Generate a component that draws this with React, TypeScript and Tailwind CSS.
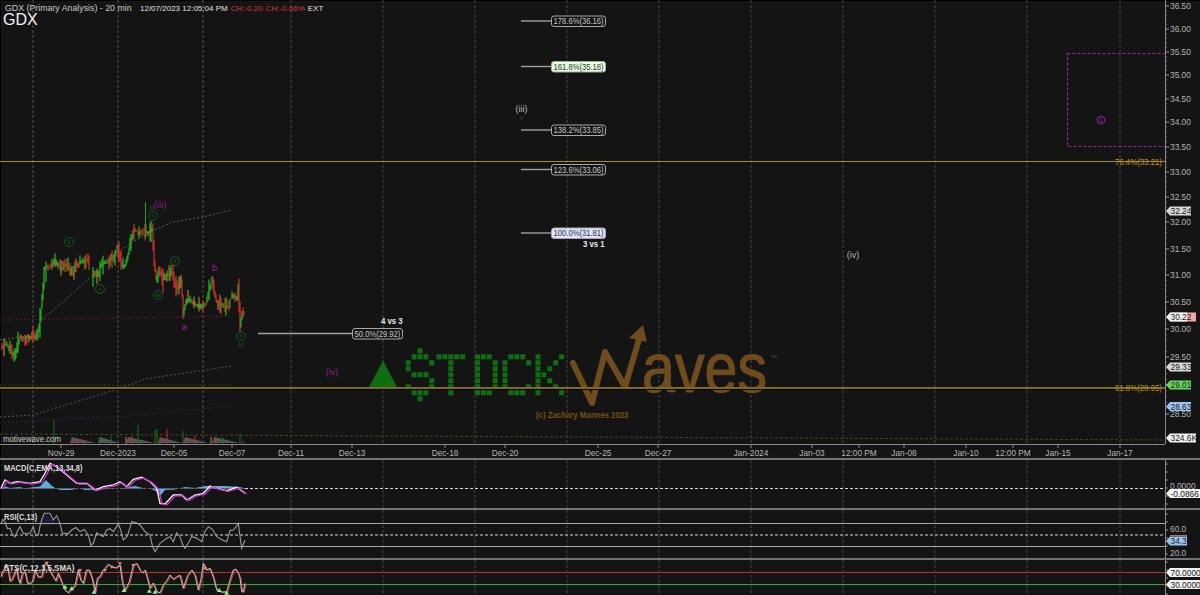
const GRID = [33, 118, 203, 291, 383, 475, 567, 659, 751, 843, 935, 1027, 1120];

const PRICE_AXIS: [string, number][] = [
  ['36.50', 6], ['36.00', 29], ['35.50', 52], ['35.00', 75], ['34.50', 99], ['34.00', 122], ['33.50', 147], ['33.00', 172],
  ['32.50', 197], ['32.00', 222], ['31.50', 249], ['31.00', 275], ['30.50', 302], ['30.00', 329], ['29.50', 357], ['', 385], ['28.50', 414],
];

const TIME_AXIS: [string, number][] = [
  ['Nov-29', 61], ['Dec-2023', 118], ['Dec-05', 174], ['Dec-07', 232], ['Dec-11', 291], ['Dec-13', 352], ['Dec-18', 445], ['Dec-20', 505],
  ['Dec-25', 598], ['Dec-27', 658], ['Jan-2024', 751], ['Jan-03', 812], ['12:00 PM', 859], ['Jan-08', 904], ['Jan-10', 966],
  ['12:00 PM', 1013], ['Jan-15', 1058], ['Jan-17', 1120],
];

const FIBS = [
  { label: '178.6%(36.16)', y: 21, x1: 521, x: 551, w: 54 },
  { label: '161.8%(35.18)', y: 66.5, x1: 521, x: 551, w: 54, bg: 'fill-[#e4ffdc]', dark: true },
  { label: '138.2%(33.85)', y: 130, x1: 521, x: 551, w: 54 },
  { label: '123.6%(33.06)', y: 169.5, x1: 521, x: 551, w: 54 },
  { label: '100.0%(31.81)', y: 233, x1: 521, x: 551, w: 54, bg: 'fill-[#dfe3ff]', dark: true },
  { label: '50.0%(29.92)', y: 333.5, x1: 258, x: 352, w: 50 },
];

const WAVES: [string, number, number][] = [
  ['3', 69, 242], ['4', 100, 289], ['5', 153, 216], ['W', 158, 295], ['X', 175, 261], ['Y', 241, 336],
];

// price path, read off the chart as [x, y]
const PRICE: [number, number][] = [
  [2, 347], [7, 345], [15, 357], [20, 338], [27, 340], [33, 335], [38, 337], [42, 310], [45, 270], [50, 267], [55, 262], [62, 267], [68, 265],
  [73, 273], [80, 262], [89, 261],
  [93, 275], [98, 277], [103, 263], [115, 258], [118, 247], [122, 262], [126, 267], [130, 247], [134, 232], [140, 232], [146, 232], [150, 233],
  [153, 227], [155, 260], [157, 280], [160, 270], [163, 280], [167, 275], [173, 272], [177, 290], [182, 280], [184, 313], [188, 298], [195, 303],
  [202, 307], [207, 302], [211, 287], [213, 280], [217, 302], [223, 305], [230, 307],
  [233, 295], [238, 300], [239, 287], [241, 327], [243, 312], [245, 316],
];

const MACD = [
  [3, 205], [15, 180], [30, 190], [50, 185], [70, 187], [90, 190], [120, 185], [135, 160], [150, 130], [170, 140], [200, 165], [230, 190], [260, 190],
  [285, 210], [310, 200], [340, 195], [360, 185], [380, 200], [400, 178], [425, 172], [450, 185], [470, 205], [480, 250], [495, 252], [520, 225],
  [545, 225], [560, 240], [585, 225], [610, 220], [630, 198], [650, 205], [680, 212], [710, 202], [735, 220],
];

const RSI = [
  [3, 310], [15, 305], [30, 325], [45, 350], [60, 320], [80, 340], [100, 320], [115, 345], [125, 300], [140, 280], [160, 300], [180, 310], [195, 340],
  [215, 330], [240, 335], [265, 345], [280, 370], [300, 345], [320, 330], [340, 335], [355, 310], [370, 360], [395, 305], [420, 315], [450, 345],
  [465, 395], [480, 370], [500, 355], [520, 365], [540, 350], [555, 385], [575, 350], [605, 365], [625, 320], [650, 350], [680, 365], [700, 330],
  [715, 310], [725, 385], [735, 360],
];

const STS = [
  [3, 470], [10, 455], [25, 450], [35, 480], [50, 445], [60, 490], [75, 455], [90, 490], [105, 450], [125, 470], [140, 430], [160, 470], [175, 460],
  [195, 510], [215, 505], [235, 450], [250, 490], [268, 450], [285, 515], [300, 470], [315, 445], [335, 440], [360, 435], [375, 510], [400, 435],
  [420, 450], [435, 450], [450, 505], [470, 515], [490, 495], [510, 465], [530, 470], [550, 505], [575, 450], [595, 510], [610, 430], [630, 445],
  [650, 510], [680, 515], [700, 450], [715, 460], [725, 515], [735, 490],
];

const STS_TOPS = [[140, 428], [240, 450], [315, 450], [335, 440], [360, 430], [400, 435], [615, 445]];
const STS_BOTTOMS = [[195, 500], [215, 505], [282, 515], [372, 510], [448, 512], [465, 515], [658, 510], [680, 518]];

function makeRandom(start: number) {
  let seed = start;
  return () => {
    seed = (seed * 1103 + 12345) % 65536;
    return seed / 65536;
  };
}

// adds a wobble between the read-off points so the line is as busy as the original
function roughen(data: number[][], amp: number, start: number, lo: number, hi: number) {
  const rnd = makeRandom(start);
  const out: number[][] = [];
  data.forEach(([x, y], i) => {
    out.push([x, y]);
    const next = data[i + 1];
    if (!next) return;
    const wobble = (rnd() - 0.5) * 2 * amp;
    out.push([(x + next[0]) / 2, Math.min(hi, Math.max(lo, (y + next[1]) / 2 + wobble))]);
  });
  return out;
}

// zoomed-in readings are 3x, the panel starts at `top`
function toPoints(data: number[][], top: number, shiftY = 0, shiftX = 0) {
  return data.map(([x, y]) => `${(x / 3 + shiftX).toFixed(1)},${(420 + y / 3 - top + shiftY).toFixed(1)}`).join(' ');
}

function priceAt(x: number) {
  for (let i = 1; i < PRICE.length; i++) {
    const [x0, y0] = PRICE[i - 1];
    const [x1, y1] = PRICE[i];
    if (x <= x1) return y0 + ((y1 - y0) * (x - x0)) / (x1 - x0);
  }
  return PRICE[PRICE.length - 1][1];
}

function buildCandles() {
  const rnd = makeRandom(17);
  const colors = ['#25c825', '#e5352b', '#25c825', '#e5352b', '#a58f35'];
  const out: { x: number; hi: number; lo: number; c: string }[] = [];
  for (let x = 2; x < 245; x += 1) {
    if (x > 89 && x < 93) continue;
    if (x > 230 && x < 232) continue;
    const wander = (rnd() - 0.5) * 4;
    const mid = priceAt(x) + wander;
    const next = priceAt(x + 1) + wander;
    const r = rnd();
    const range = 0.8 + r * r * 9;
    out.push({
      x,
      hi: Math.min(mid, next) - range,
      lo: Math.max(mid, next) + range * (0.4 + rnd()),
      c: next > mid + 2 ? '#e5352b' : next < mid - 2 ? '#25c825' : colors[Math.floor(rnd() * 5)],
    });
  }
  return out;
}

const CANDLES = buildCandles();

const VOLUME: [number, number, string][] = [
  [54, 420, '#0f7a1a'], [72, 438, '#a33'], [78, 440, '#d22'], [84, 440, '#d22'], [99, 437, '#0f7a1a'], [111, 436, '#0f7a1a'], [126, 437, '#a58f35'],
  [132, 436, '#d22'], [138, 425, '#0f7a1a'], [155, 430, '#0f7a1a'], [157, 429, '#0f7a1a'], [160, 437, '#d22'], [167, 429, '#d22'], [183, 431, '#0f7a1a'],
  [186, 438, '#d22'], [195, 436, '#d22'], [211, 437, '#a58f35'], [216, 440, '#d22'], [223, 437, '#0f7a1a'], [240, 434, '#0f7a1a'], [243, 441, '#d22'],
];

const SAWS: [number, number][] = [[70, 96], [98, 120], [126, 155], [158, 182], [183, 208], [212, 240]];

// the platform's type is narrower than Arial at the same height
function Label({ x, y, size = 9.5, squeeze = 0.88, fill, bold, anchor, children }: {
  x: number;
  y: number;
  size?: number;
  squeeze?: number;
  fill: string;
  bold?: boolean;
  anchor?: 'middle';
  children: string;
}) {
  return (
    <text transform={`translate(${x} ${y}) scale(${squeeze} 1)`} fontSize={size} fontWeight={bold ? 700 : 400} textAnchor={anchor} fill={fill}>
      {children}
    </text>
  );
}

function GridLines({ height }: { height: number }) {
  return (
    <g>
      {GRID.map((x, i) => (
        <line key={x} x1={x} x2={x} y1={0} y2={height} stroke="#444" strokeWidth={i < 3 ? 1.3 : 1} strokeDasharray="3 2" />
      ))}
    </g>
  );
}

function PriceTag({ y, label, fill, width = 26, text = '#1a1a1a' }: { y: number; label: string; fill: string; width?: number; text?: string }) {
  return (
    <g>
      <polygon points={`1,${y} 5,${y - 4.5} ${width},${y - 4.5} ${width},${y + 4.5} 5,${y + 4.5}`} fill={fill} />
      <Label x={5.5} y={y + 3.3} fill={text}>{label}</Label>
    </g>
  );
}

function AxisLine({ height }: { height: number }) {
  return <line x1={0.5} x2={0.5} y1={0} y2={height} stroke="#8a8a8a" />;
}

function PriceAxis() {
  const ticks: number[] = [];
  for (let i = 1; i < PRICE_AXIS.length; i++) {
    const a = PRICE_AXIS[i - 1][1];
    const b = PRICE_AXIS[i][1];
    for (let k = 1; k < 5; k++) ticks.push(a + ((b - a) * k) / 5);
  }
  return (
    <svg width={35} height={458} className="shrink-0">
      <AxisLine height={444} />
      {ticks.map(y => (
        <line key={y} x1={0} x2={2} y1={y} y2={y} stroke="#777" />
      ))}
      {PRICE_AXIS.map(([label, y]) => (
        <g key={y}>
          <line x1={0} x2={4} y1={y} y2={y} stroke="#999" />
          {label && <Label x={5} y={y + 3.3} fill="#b4b4b4">{label}</Label>}
        </g>
      ))}
      <PriceTag y={211} label="32.24" fill="#d8d8d8" />
      <rect x={5} y={312.5} width={26} height={9} fill="#f0a8a0" />
      <PriceTag y={317} label="30.22" fill="#f2f2f2" width={22} />
      <PriceTag y={367} label="29.33" fill="#d8d8d8" />
      <PriceTag y={385} label="29.01" fill="#66d65c" />
      <PriceTag y={406.5} label="28.63" fill="#9cc4f2" />
      <PriceTag y={438} label="324.6K" fill="#f2f2f2" width={31} />
    </svg>
  );
}

function Logo() {
  const dollar = [[2, 0], [1, 1], [2, 1], [3, 1], [0, 2], [4, 2], [0, 3], [1, 4], [2, 4], [3, 4], [4, 5], [0, 6], [4, 6], [1, 7], [2, 7], [3, 7], [2, 8]];
  const t = [[0, 1], [1, 1], [2, 1], [3, 1], [4, 1], [2, 2], [2, 3], [2, 4], [2, 5], [2, 6], [2, 7]];
  const o = [[0, 1], [1, 1], [2, 1], [0, 2], [3, 2], [0, 3], [3, 3], [0, 4], [3, 4], [0, 5], [3, 5], [0, 6], [3, 6], [0, 7], [1, 7], [2, 7]];
  const c = [[1, 1], [2, 1], [3, 1], [0, 2], [4, 2], [0, 3], [0, 4], [0, 5], [0, 6], [4, 6], [1, 7], [2, 7], [3, 7]];
  const k = [[0, 1], [0, 2], [0, 3], [0, 4], [0, 5], [0, 6], [0, 7], [4, 1], [3, 2], [2, 3], [1, 4], [2, 5], [3, 6], [4, 7]];
  const letters: [number[][], number][] = [[dollar, 405.7], [t, 436.5], [o, 475], [c, 502.5], [k, 535.5]];
  return (
    <g>
      <polygon points="369,387 383,360.5 397,387" fill="#0f6e12" />
      {letters.map(([cells, left]) =>
        cells.map(([cx, cy]) => (
          <rect key={`${left}-${cx}-${cy}`} x={left + cx * 5.9} y={348.3 + cy * 6} width={5} height={5} fill="#0f6e12" />
        )),
      )}
      <polyline points="573,363 592,403 605,352 625,387 640,336" fill="none" stroke="#6f4c1e" strokeWidth={6} strokeLinecap="round" strokeLinejoin="round" />
      <polygon points="643,325 629,338 647,342" fill="#6f4c1e" />
      <text x={642} y={392} fontSize={70} fill="#6f4c1e" stroke="#6f4c1e" strokeWidth={1.2} textLength={125} lengthAdjust="spacingAndGlyphs">aves</text>
      <Label x={770} y={359.5} size={7} squeeze={1} fill="#5a4a30">™</Label>
      <Label x={536} y={418} size={8.5} squeeze={0.92} bold fill="#7a4f14">(c) Zachary Mannes 2023</Label>
    </g>
  );
}

function MainChart() {
  return (
    <svg width={1165} height={444} className="block">
      <GridLines height={444} />
      {/* moving averages */}
      <polyline points="0,340 20,337 35,333 43,318 62,303 93,275 118,252 147,233 173,222 203,217 232,210" fill="none" stroke="#5c5c5c" strokeDasharray="2 2" />
      <polyline points="0,320 60,319 120,318 180,317 232,316" fill="none" stroke="#5a1f1f" strokeDasharray="2 2" />
      <polyline points="0,385 100,385 232,385" fill="none" stroke="#1c3d25" strokeDasharray="2 2" />
      <polyline points="0,417 33,415 118,389 145,379 232,366" fill="none" stroke="#555" strokeDasharray="2 2" />
      <polyline points="0,423 50,420 118,417 232,406" fill="none" stroke="#1f2a4a" strokeDasharray="2 2" />
      <line x1={0} x2={1165} y1={434} y2={440} stroke="#46451a" strokeDasharray="3 2" />

      <Logo />

      {/* retracement lines */}
      <line x1={0} x2={1165} y1={161.5} y2={161.5} stroke="#a88c20" />
      <rect x={0} y={387} width={1165} height={2} fill="#806a1c" />
      <rect x={0} y={389} width={1165} height={1} fill="#000" />
      <Label x={1115} y={164.5} size={9} squeeze={0.87} fill="#c29a10">76.4%(33.21)</Label>
      <Label x={1115} y={391} size={9} squeeze={0.87} fill="#b8960f">61.8%(28.95)</Label>

      {/* volume */}
      {SAWS.map(([a, b]) => (
        <polygon key={a} points={`${a},443 ${a + 2},437 ${b},443`} fill="#555" />
      ))}
      {VOLUME.map(([x, y, c]) => (
        <line key={x} x1={x} x2={x} y1={y} y2={444} stroke={c} />
      ))}
      <Label x={3} y={441.5} size={9.5} squeeze={0.82} fill="#d0d0d0">motivewave.com</Label>

      {/* candles */}
      {CANDLES.map(c => (
        <line key={c.x} x1={c.x} x2={c.x} y1={c.hi} y2={c.lo} stroke={c.c} strokeWidth={1.1} />
      ))}
      <line x1={145.5} x2={145.5} y1={202} y2={238} stroke="#25a025" />

      {/* wave counts */}
      {WAVES.map(([label, x, y]) => (
        <g key={label}>
          <circle cx={x} cy={y} r={4.4} fill="none" stroke="#12591a" />
          <text x={x} y={y + 2} fontSize={6} textAnchor="middle" fill="#12591a">{label}</text>
        </g>
      ))}
      <text x={152} y={210} fontSize={7} textAnchor="middle" fill="#12591a">iii</text>
      <text x={160} y={207.5} fontSize={9.5} textAnchor="middle" fill="#8a1f90">(iii)</text>
      <text x={184.5} y={330} fontSize={9} textAnchor="middle" fill="#a020a8">a</text>
      <text x={214.5} y={271} fontSize={9} textAnchor="middle" fill="#a020a8">b</text>
      <text x={241} y={347} fontSize={7} textAnchor="middle" fill="#12591a">iv</text>
      <text x={332} y={374.5} fontSize={9} textAnchor="middle" fill="#8a1f90">(iv)</text>
      <text x={521.5} y={112} fontSize={9} textAnchor="middle" fill="#b8b8b8">(iii)</text>
      <text x={521.5} y={120} fontSize={7} textAnchor="middle" fill="#12591a">v</text>
      <text x={853} y={258} fontSize={9} textAnchor="middle" fill="#b8b8b8">(iv)</text>

      {/* fib targets */}
      {FIBS.map(f => (
        <g key={f.label}>
          <line x1={f.x1} x2={f.x} y1={f.y} y2={f.y} stroke="#a0a0a0" strokeWidth={1.4} />
          <rect x={f.x + 0.5} y={f.y - 5} width={f.w} height={10.5} rx={2.5} stroke="#a8a8a8" className={f.bg ?? 'fill-[#141414]'} />
          <Label x={f.x + 2.5} y={f.y + 3.2} size={8.8} squeeze={0.87} fill={f.dark ? '#333' : '#c8c8c8'}>{f.label}</Label>
        </g>
      ))}
      <Label x={583} y={247} size={8.5} squeeze={0.92} bold fill="#e8e8e8">3 vs 1</Label>
      <Label x={381} y={324} size={8.5} squeeze={0.92} bold fill="#e8e8e8">4 vs 3</Label>

      {/* target box */}
      <rect x={1067.5} y={53.5} width={98} height={93} fill="none" stroke="#a01fa5" strokeWidth={1.2} strokeDasharray="3 2" />
      <circle cx={1101} cy={120} r={3.8} fill="none" stroke="#a01fa5" />
      <text x={1101} y={122} fontSize={6} textAnchor="middle" fill="#a01fa5">1</text>
    </svg>
  );
}

function TimeAxis() {
  return (
    <svg width={1165} height={14} className="block">
      <line x1={0} x2={1165} y1={0.5} y2={0.5} stroke="#8a8a8a" />
      {TIME_AXIS.map(([label, x]) => (
        <g key={`${label}-${x}`}>
          <line x1={x} x2={x} y1={0} y2={4} stroke="#8a8a8a" />
          <Label x={x} y={11.5} anchor="middle" size={9.2} squeeze={0.9} fill="#b4b4b4">{label}</Label>
        </g>
      ))}
    </svg>
  );
}

function Separator() {
  return <div className="h-[2px] shrink-0 bg-[#747474]" />;
}

function MacdPanel() {
  return (
    <div className="flex h-[48px]">
      <svg width={1165} height={48} className="block">
        <GridLines height={48} />
        <polygon
          points="0,28.5 5,26.5 10,28 20,27 24,28.5 35,27 40,26.5 46,20 52,26 56,28.5 60,30 70,30 80,28.5 85,30 120,28.5 130,27 135,26 145,28.5 150,28.5 156,31 160,36 165,30 175,29.5 185,27 195,28 205,26 225,26 240,27 245,28.5"
          fill="#63abd8"
        />
        <line x1={0} x2={245} y1={28.5} y2={28.5} stroke="#666" strokeDasharray="2 2" />
        <line x1={245} x2={1165} y1={28.5} y2={28.5} stroke="#d8d8d8" strokeDasharray="3 2" />
        <polyline points={toPoints(MACD, 460)} fill="none" stroke="#f2f2f2" strokeWidth={1.3} />
        <polyline points={toPoints(MACD, 460, 0.8, 2)} fill="none" stroke="#d02fd4" strokeWidth={1.2} />
        <Label x={4} y={11} size={8.8} squeeze={0.85} bold fill="#dcdcdc">MACD(C,EMA,13,34,8)</Label>
      </svg>
      <svg width={35} height={48} className="shrink-0">
        <AxisLine height={48} />
        {[4, 12, 20, 28, 36, 44].map(y => (
          <line key={y} x1={0} x2={3} y1={y} y2={y} stroke="#8a8a8a" />
        ))}
        <Label x={5} y={29} fill="#b4b4b4">0.0000</Label>
        <PriceTag y={33.5} label="-0.0866" fill="#f2f2f2" width={35} />
      </svg>
    </div>
  );
}

function RsiPanel() {
  return (
    <div className="flex h-[48px]">
      <svg width={1165} height={48} className="block">
        <GridLines height={48} />
        <polygon points="40,17 46,3 54,12 60,15 42,15" fill="#1a1f38" />
        <line x1={0} x2={1165} y1={13.5} y2={13.5} stroke="#a8a8a8" />
        <line x1={0} x2={1165} y1={25} y2={25} stroke="#d8d8d8" strokeDasharray="3 2" />
        <line x1={0} x2={1165} y1={36.5} y2={36.5} stroke="#a8a8a8" />
        <polyline points={toPoints(roughen(RSI, 20, 5, 280, 395), 510)} fill="none" stroke="#9a9a9a" strokeWidth={1.1} />
        <Label x={4} y={10} size={8.8} squeeze={0.85} bold fill="#dcdcdc">RSI(C,13)</Label>
      </svg>
      <svg width={35} height={48} className="shrink-0">
        <AxisLine height={48} />
        {[4, 12, 20, 28, 36, 44].map(y => (
          <line key={y} x1={0} x2={3} y1={y} y2={y} stroke="#8a8a8a" />
        ))}
        <Label x={5} y={22} fill="#b4b4b4">60.0</Label>
        <line x1={5} x2={22} y1={25.5} y2={25.5} stroke="#c46a62" />
        <PriceTag y={31} label="34.3" fill="#9cc4f2" width={22} />
        <Label x={5} y={46} fill="#b4b4b4">20.0</Label>
      </svg>
    </div>
  );
}

function StsPanel() {
  const sts = roughen(STS, 22, 9, 430, 518);
  return (
    <div className="flex h-[35px]">
      <svg width={1165} height={35} className="block">
        <GridLines height={35} />
        <line x1={0} x2={1165} y1={12.5} y2={12.5} stroke="#b8302c" />
        <line x1={0} x2={1165} y1={24.5} y2={24.5} stroke="#2fae2c" />
        <polyline points={toPoints(sts, 560, 0.6, 1)} fill="none" stroke="#d94a40" />
        <polyline points={toPoints(sts, 560)} fill="none" stroke="#c0c0c0" />
        {STS_TOPS.map(([x, y]) => {
          const px = x / 3;
          const py = 420 + y / 3 - 560;
          return <polygon key={x} points={`${px - 2},${py - 1} ${px + 2},${py - 1} ${px},${py + 2}`} fill="#f08a80" />;
        })}
        {STS_BOTTOMS.map(([x, y]) => {
          const px = x / 3;
          const py = 420 + y / 3 - 560;
          return <polygon key={x} points={`${px - 2.5},${py + 2} ${px + 2.5},${py + 2} ${px},${py - 2}`} fill="#8cf08c" />;
        })}
        <Label x={4} y={11} size={8.8} squeeze={0.9} bold fill="#dcdcdc">STS(C,12,3,5,SMA)</Label>
      </svg>
      <svg width={35} height={35} className="shrink-0">
        <AxisLine height={35} />
        {[2, 10, 18, 26, 34].map(y => (
          <line key={y} x1={0} x2={3} y1={y} y2={y} stroke="#8a8a8a" />
        ))}
        <PriceTag y={12.5} label="70.0000" fill="#f2f2f2" width={35} />
        <PriceTag y={24.5} label="30.0000" fill="#f2f2f2" width={35} />
      </svg>
    </div>
  );
}

export default function App() {
  return (
    <div className="flex h-[595px] w-[1200px] flex-col overflow-hidden bg-[#141414] font-['Liberation_Sans',Arial,sans-serif] shadow-[inset_1px_1px_0_#000]">
      <div className="relative flex h-[458px] shrink-0">
        <div className="flex w-[1165px] shrink-0 flex-col">
          <MainChart />
          <TimeAxis />
        </div>
        <PriceAxis />
        <div className="absolute left-[5px] top-[3px] flex items-baseline gap-[7px] whitespace-nowrap text-[8.8px] leading-[11px] text-[#c8c8c8]">
          <span className="w-[128px]">GDX (Primary Analysis) - 20 min</span>
          <span className="flex gap-[3px] text-[8px]">
            <span className="text-[#e0e0e0]">12/07/2023 12:05:04 PM</span>
            <span className="text-[#d9363a]">CH:-0.20</span>
            <span className="text-[#d9363a]">CH:-0.66%</span>
            <span className="text-[#e0e0e0]">EXT</span>
          </span>
        </div>
        <div className="absolute left-[3px] top-[11px] text-[16px] leading-[18px] text-[#f4f4f4]">GDX</div>
      </div>
      <Separator />
      <MacdPanel />
      <Separator />
      <RsiPanel />
      <Separator />
      <StsPanel />
    </div>
  );
}
